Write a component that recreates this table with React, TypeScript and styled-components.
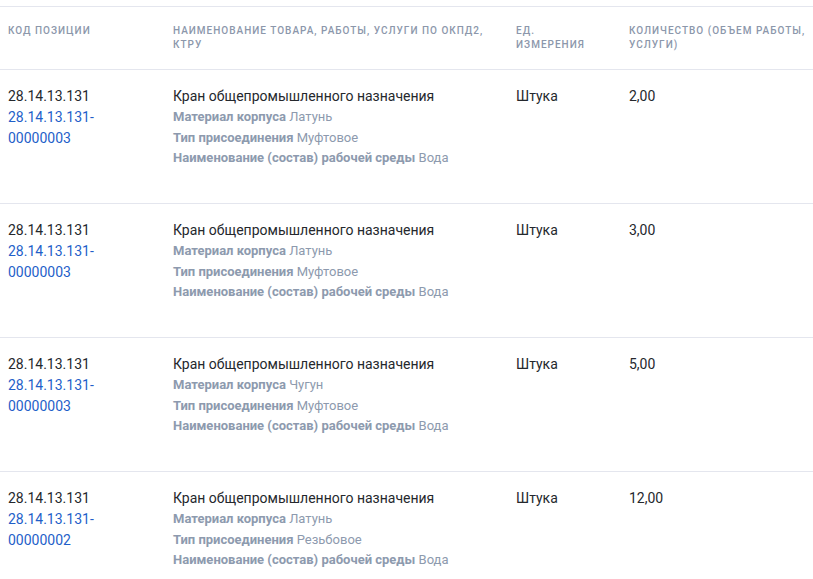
import React from "react";
import styled, { createGlobalStyle } from "styled-components";

const Global = createGlobalStyle`
  html, body { margin: 0; padding: 0; background: #fff; }
  body { font-family: Roboto, "Noto Sans", sans-serif; -webkit-font-smoothing: antialiased; }
`;

const Page = styled.div`
  padding-top: 6px;
`;

const Table = styled.table`
  width: 100%;
  border-collapse: collapse;
  table-layout: fixed;
  border-top: 1px solid #e4e6ee;
`;

const Th = styled.th<{ $w?: number }>`
  box-sizing: border-box;
  ${(p) => (p.$w ? `width: ${p.$w}px;` : "")}
  text-align: left;
  vertical-align: top;
  padding: 17px 16px 17px 8px;
  font-size: 10px;
  line-height: 14px;
  font-weight: 500;
  letter-spacing: 1px;
  text-transform: uppercase;
  color: #8c97ab;
  border-bottom: 1px solid #e4e6ee;
  &:last-child { padding-right: 0; }
`;

const Tr = styled.tr`
  height: 134px;
  border-bottom: 1px solid #e4e6ee;
`;

const Td = styled.td`
  box-sizing: border-box;
  vertical-align: top;
  padding: 16px 16px 0 8px;
  font-size: 14px;
  line-height: 21px;
  color: #25282d;
  &:last-child { padding-right: 0; }
`;

const CodeLink = styled.a`
  display: block;
  color: #1f5fc9;
  text-decoration: none;
`;

const AttrList = styled.div`
  display: flex;
  flex-direction: column;
`;

const Attr = styled.div`
  font-size: 13px;
  line-height: 20.5px;
  color: #8d9aae;
`;

const AttrName = styled.span`
  font-weight: 700;
`;

type Row = {
  code: string;
  ktru: string;
  material: string;
  joint: string;
  qty: string;
};

const rows: Row[] = [
  { code: "28.14.13.131", ktru: "00000003", material: "Латунь", joint: "Муфтовое", qty: "2,00" },
  { code: "28.14.13.131", ktru: "00000003", material: "Латунь", joint: "Муфтовое", qty: "3,00" },
  { code: "28.14.13.131", ktru: "00000003", material: "Чугун", joint: "Муфтовое", qty: "5,00" },
  { code: "28.14.13.131", ktru: "00000002", material: "Латунь", joint: "Резьбовое", qty: "12,00" },
];

export default function App() {
  return (
    <>
      <Global />
      <Page>
        <Table>
          <thead>
            <tr>
              <Th $w={165}>Код позиции</Th>
              <Th $w={343}>Наименование товара, работы, услуги по ОКПД2, КТРУ</Th>
              <Th $w={113}>Ед. измерения</Th>
              <Th>Количество (объем работы, услуги)</Th>
            </tr>
          </thead>
          <tbody>
            {rows.map((r, i) => (
              <Tr key={i}>
                <Td>
                  {r.code}
                  <CodeLink href="#">
                    {r.code}-
                    <br />
                    {r.ktru}
                  </CodeLink>
                </Td>
                <Td>
                  Кран общепромышленного назначения
                  <AttrList>
                    <Attr>
                      <AttrName>Материал корпуса</AttrName> {r.material}
                    </Attr>
                    <Attr>
                      <AttrName>Тип присоединения</AttrName> {r.joint}
                    </Attr>
                    <Attr>
                      <AttrName>Наименование (состав) рабочей среды</AttrName> Вода
                    </Attr>
                  </AttrList>
                </Td>
                <Td>Штука</Td>
                <Td>{r.qty}</Td>
              </Tr>
            ))}
          </tbody>
        </Table>
      </Page>
    </>
  );
}
